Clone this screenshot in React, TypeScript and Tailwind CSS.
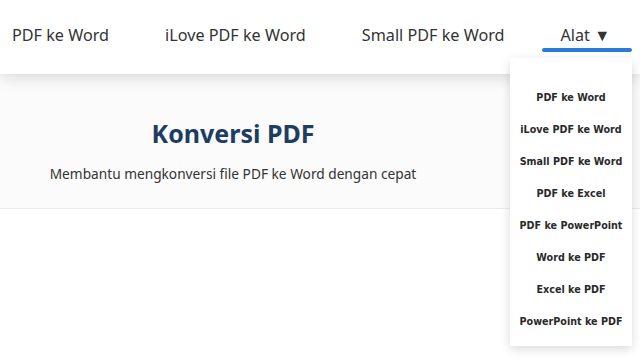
import React from "react";

const items = [
  "PDF ke Word",
  "iLove PDF ke Word",
  "Small PDF ke Word",
  "PDF ke Excel",
  "PDF ke PowerPoint",
  "Word ke PDF",
  "Excel ke PDF",
  "PowerPoint ke PDF",
];

export default function App() {
  return (
    <div className="relative w-[640px] h-[360px] overflow-hidden bg-white" style={{ fontFamily: '"Noto Sans", "Open Sans", sans-serif' }}>
      <header className="relative z-10 h-[74px] bg-white shadow-[0_4px_14px_rgba(0,0,0,0.13)] flex items-center pl-3 gap-[56px] text-[16.2px] text-[#333] pb-[4px]">
        <span>PDF ke Word</span>
        <span>iLove PDF ke Word</span>
        <span>Small PDF ke Word</span>
        <span className="relative">
          Alat ▼
          <span className="absolute left-[-19px] right-[-22px] top-[25px] h-[4px] rounded-full bg-[#2a7bd6]" />
        </span>
      </header>
      <section className="h-[135px] bg-[#fbfbfb] border-b border-[#ebebeb] flex">
        <div className="w-[466px] flex flex-col items-center pt-[44px]">
          <h1 className="text-[25px] font-bold text-[#1d3d63] leading-[30px]">Konversi PDF</h1>
          <p className="mt-[17px] text-[13.7px] text-[#333] leading-[18px]">Membantu mengkonversi file PDF ke Word dengan cepat</p>
        </div>
      </section>
      <div className="absolute z-20 left-[510px] top-[58px] w-[122px] bg-white shadow-[0_3px_10px_rgba(0,0,0,0.15)] pt-6 pb-2 flex flex-col">
        {items.map((t) => (
          <div key={t} className="h-8 flex items-center justify-center text-[9.6px] font-bold text-[#2a2a2a] whitespace-nowrap" style={{ fontFamily: '"DejaVu Sans", Verdana, sans-serif' }}>
            {t}
          </div>
        ))}
      </div>
    </div>
  );
}
